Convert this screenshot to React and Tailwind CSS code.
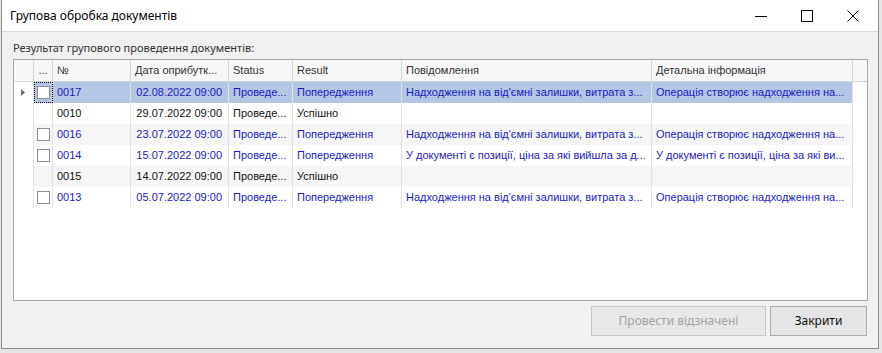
import React from "react";

const cols = [
  { key: "ind", w: 20 },
  { key: "chk", w: 19, title: "..." },
  { key: "n", w: 78, title: "№" },
  { key: "d", w: 98, title: "Дата оприбутк...", right: true },
  { key: "s", w: 64, title: "Status" },
  { key: "r", w: 109, title: "Result" },
  { key: "m", w: 250, title: "Повідомлення" },
  { key: "det", w: 201, title: "Детальна інформація" },
];

const msgIn = "Надходження на від'ємні залишки, витрата з...";
const detIn = "Операція створює надходження на...";

const rows = [
  { n: "0017", d: "02.08.2022 09:00", s: "Проведе...", r: "Попередження", m: msgIn, det: detIn, warn: true, sel: true },
  { n: "0010", d: "29.07.2022 09:00", s: "Проведе...", r: "Успішно", m: "", det: "" },
  { n: "0016", d: "23.07.2022 09:00", s: "Проведе...", r: "Попередження", m: msgIn, det: detIn, warn: true },
  {
    n: "0014",
    d: "15.07.2022 09:00",
    s: "Проведе...",
    r: "Попередження",
    m: "У документі є позиції, ціна за які вийшла за д...",
    det: "У документі є позиції, ціна за які ви...",
    warn: true,
  },
  { n: "0015", d: "14.07.2022 09:00", s: "Проведе...", r: "Успішно", m: "", det: "" },
  { n: "0013", d: "05.07.2022 09:00", s: "Проведе...", r: "Попередження", m: msgIn, det: detIn, warn: true },
];

const gridFont = { fontFamily: '"Liberation Sans", Arial, sans-serif' };
const uiFont = { fontFamily: '"Noto Sans", "Open Sans", sans-serif' };

const CheckBox = () => <div className="w-[13px] h-[13px] bg-white border border-[#8f8f8f]" />;

const HeaderRow = () => (
  <div className="flex h-[22px] bg-[#f7f7f7] border-b border-[#d5d5d5] text-[#333] text-[11px]">
    {cols.map((c) => (
      <div
        key={c.key}
        style={{ width: c.w }}
        className={
          "shrink-0 border-r border-[#d5d5d5] flex items-center whitespace-nowrap overflow-hidden " +
          (c.key === "chk" ? "justify-center" : "pl-[4px]")
        }
      >
        {c.title}
      </div>
    ))}
    <div className="flex-1" />
  </div>
);

const DataRow = ({ row, idx }) => {
  const color = row.warn ? "text-[#1c1cc4]" : "text-[#111]";
  const bg = row.sel ? "bg-[#b3c6e3]" : idx % 2 === 0 ? "bg-[#f6f6f6]" : "bg-white";
  return (
    <div className={"flex h-[21px] text-[11px] " + color}>
      <div className="w-[20px] shrink-0 bg-white border-r border-[#e2e2e2] flex items-center justify-center">
        {row.sel && (
          <svg width="5" height="7" viewBox="0 0 5 7">
            <path d="M0 0 L4 3.5 L0 7 Z" fill="#6d6d6d" />
          </svg>
        )}
      </div>
      <div
        className={
          "w-[19px] shrink-0 border-r border-[#e2e2e2] flex items-center justify-center " +
          (row.sel ? "bg-[#b3c6e3] outline-1 outline-dotted outline-black -outline-offset-1" : bg)
        }
      >
        {row.warn && <CheckBox />}
      </div>
      <div className={"flex flex-1 " + bg}>
        <div className="w-[78px] shrink-0 border-r border-[#e2e2e2] pl-[4px] flex items-center">{row.n}</div>
        <div className="w-[98px] shrink-0 border-r border-[#e2e2e2] pr-[6px] flex items-center justify-end whitespace-nowrap">
          {row.d}
        </div>
        <div className="w-[64px] shrink-0 border-r border-[#e2e2e2] pl-[4px] flex items-center whitespace-nowrap overflow-hidden">
          {row.s}
        </div>
        <div className="w-[109px] shrink-0 border-r border-[#e2e2e2] pl-[4px] flex items-center whitespace-nowrap overflow-hidden">
          {row.r}
        </div>
        <div className="w-[250px] shrink-0 border-r border-[#e2e2e2] pl-[4px] flex items-center whitespace-nowrap overflow-hidden">
          {row.m}
        </div>
        <div className="w-[201px] shrink-0 border-r border-[#e2e2e2] pl-[4px] flex items-center whitespace-nowrap overflow-hidden">
          {row.det}
        </div>
      </div>
      <div className="w-[14px] shrink-0 bg-white" />
    </div>
  );
};

export default function App() {
  return (
    <div className="w-[882px] h-[353px] bg-[#e4e4e4] overflow-hidden">
      <div className="ml-[1px] w-[878px] h-[349px] border-x border-b border-[#8c8c8c] bg-[#f0f0f0] flex flex-col">
        <div className="h-[32px] shrink-0 bg-white border-b border-[#dadada] flex items-center" style={uiFont}>
          <div className="pl-[8px] text-[12px] text-black flex-1">Групова обробка документів</div>
          <div className="flex items-center h-full">
            <div className="w-[46px] h-full flex items-center justify-center">
              <svg width="12" height="12" viewBox="0 0 12 12">
                <path d="M0 6.5 H12" stroke="#000" strokeWidth="1" />
              </svg>
            </div>
            <div className="w-[46px] h-full flex items-center justify-center">
              <svg width="12" height="12" viewBox="0 0 12 12">
                <rect x="0.5" y="0.5" width="11" height="11" fill="none" stroke="#000" strokeWidth="1" />
              </svg>
            </div>
            <div className="w-[46px] h-full flex items-center justify-center mr-[2px]">
              <svg width="12" height="12" viewBox="0 0 12 12">
                <path d="M0.5 0.5 L11.5 11.5 M11.5 0.5 L0.5 11.5" stroke="#000" strokeWidth="1" />
              </svg>
            </div>
          </div>
        </div>

        <div className="flex flex-col px-[11px] pt-[8px]">
          <div className="h-[16px] text-[11px] text-[#333] leading-[16px]" style={uiFont}>
            Результат групового проведення документів:
          </div>
          <div className="mt-[3px] w-[855px] h-[242px] border border-[#a9a9a9] bg-white flex flex-col" style={gridFont}>
            <HeaderRow />
            {rows.map((r, i) => (
              <DataRow key={r.n} row={r} idx={i} />
            ))}
          </div>
          <div className="mt-[5px] flex justify-end gap-[4px] text-[12px]" style={uiFont}>
            <button className="w-[175px] h-[30px] border border-[#c8c8c8] bg-[#e8e8e8] text-[#a3a3a3]">
              Провести відзначені
            </button>
            <button className="w-[97px] h-[30px] border border-[#adadad] bg-[#e5e5e5] text-[#111]">Закрити</button>
          </div>
        </div>
      </div>
    </div>
  );
}
